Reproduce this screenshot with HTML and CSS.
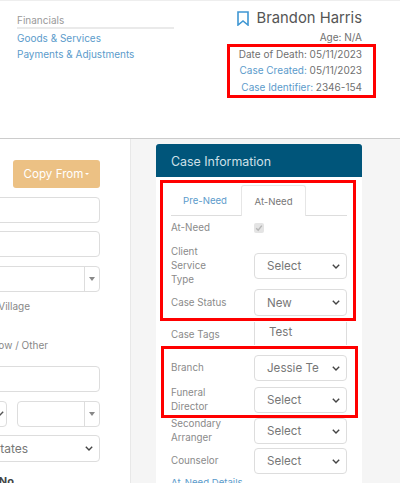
FILE: index.html
```html
<!DOCTYPE html>
<html lang="en">
<head>
<meta charset="utf-8">
<title>Case Information</title>
<link rel="stylesheet" href="styles.css">
</head>
<body>
<div class="page">
  <header class="top">
    <nav class="fin">
      <div class="fin-head">Financials</div>
      <a class="link fin-link">Goods &amp; Services</a>
      <a class="link fin-link">Payments &amp; Adjustments</a>
    </nav>
    <div class="who">
      <div class="name-line">
        <svg class="mark" width="12" height="15" viewBox="0 0 12 15"><path d="M1 1h10v13L6 10 1 14z" fill="none" stroke="#3f97d3" stroke-width="1.6"/></svg>
        <span class="name">Brandon Harris</span>
      </div>
      <div class="meta age">Age: N/A</div>
      <div class="meta">Date of Death: 05/11/2023</div>
      <div class="meta"><a class="link">Case Created:</a> 05/11/2023</div>
      <div class="meta"><a class="link">Case Identifier:</a> 2346-154</div>
    </div>
  </header>
  <main class="main">
    <section class="left">
      <button class="copy">Copy From<span class="caret"></span></button>
      <div class="field"></div>
      <div class="field"></div>
      <div class="field combo"><span class="addon"><span class="mini"></span></span></div>
      <div class="note n1">Village</div>
      <div class="note n2">Widow / Other</div>
      <div class="field f4"></div>
      <div class="pair">
        <div class="field stub"><svg class="chev" width="8" height="5" viewBox="0 0 8 5"><path d="M.8.8 4 4 7.2.8" fill="none" stroke="#555" stroke-width="1.4"/></svg></div>
        <div class="field combo short"><span class="addon"><span class="mini"></span></span></div>
      </div>
      <div class="field country"><span class="country-t">United States</span><svg class="chev" width="8" height="5" viewBox="0 0 8 5"><path d="M.8.8 4 4 7.2.8" fill="none" stroke="#444" stroke-width="1.4"/></svg></div>
      <div class="no">No</div>
    </section>
    <aside class="gutter">
      <div class="panel">
        <div class="panel-head">Case Information</div>
        <div class="panel-body">
          <div class="tabs">
            <a class="tab link">Pre-Need</a>
            <span class="tab on">At-Need</span>
          </div>
          <div class="row r-check"><span class="lbl">At-Need</span><span class="check"><svg width="8" height="8" viewBox="0 0 8 8"><path d="M1.2 4.2 3.2 6.2 6.8 1.6" fill="none" stroke="#b5b5b5" stroke-width="1.4"/></svg></span></div>
          <div class="row r-client"><span class="lbl">Client<br>Service<br>Type</span><div class="sel"><span class="val">Select</span><svg class="chev" width="8" height="5" viewBox="0 0 8 5"><path d="M.8.8 4 4 7.2.8" fill="none" stroke="#444" stroke-width="1.4"/></svg></div></div>
          <div class="row r-status"><span class="lbl">Case Status</span><div class="sel tall"><span class="val">New</span><svg class="chev" width="8" height="5" viewBox="0 0 8 5"><path d="M.8.8 4 4 7.2.8" fill="none" stroke="#444" stroke-width="1.4"/></svg></div></div>
          <div class="row r-tags"><span class="lbl lbl-tags">Case Tags</span><div class="tagbox">Test</div></div>
          <div class="row r-branch"><span class="lbl">Branch</span><div class="sel"><span class="val">Jessie Test</span><svg class="chev" width="8" height="5" viewBox="0 0 8 5"><path d="M.8.8 4 4 7.2.8" fill="none" stroke="#444" stroke-width="1.4"/></svg></div></div>
          <div class="row r-next"><span class="lbl">Funeral<br>Director</span><div class="sel"><span class="val">Select</span><svg class="chev" width="8" height="5" viewBox="0 0 8 5"><path d="M.8.8 4 4 7.2.8" fill="none" stroke="#444" stroke-width="1.4"/></svg></div></div>
          <div class="row r-next"><span class="lbl">Secondary<br>Arranger</span><div class="sel"><span class="val">Select</span><svg class="chev" width="8" height="5" viewBox="0 0 8 5"><path d="M.8.8 4 4 7.2.8" fill="none" stroke="#444" stroke-width="1.4"/></svg></div></div>
          <div class="row r-next"><span class="lbl">Counselor</span><div class="sel"><span class="val">Select</span><svg class="chev" width="8" height="5" viewBox="0 0 8 5"><path d="M.8.8 4 4 7.2.8" fill="none" stroke="#444" stroke-width="1.4"/></svg></div></div>
          <a class="link more">At-Need Details</a>
        </div>
      </div>
    </aside>
  </main>
  <div class="mark-box b1"></div>
  <div class="mark-box b2"></div>
  <div class="mark-box b3"></div>
</div>
</body>
</html>
```
FILE: styles.css
```css
* { box-sizing: border-box; }
html, body { margin: 0; padding: 0; }
body { width: 400px; height: 483px; overflow: hidden; background: #fff; font-family: Inter, "Noto Sans", sans-serif; color: #777; }
.page { position: relative; width: 400px; height: 483px; overflow: hidden; }
.link { color: #5b9bcb; text-decoration: none; }

.top { display: flex; justify-content: space-between; height: 139px; border-top: 1px solid #eee; border-bottom: 1px solid #ccc; }
.fin { width: 157px; margin-left: 17px; padding-top: 13px; display: flex; flex-direction: column; font-size: 10px; }
.fin-head { height: 15px; color: #9a9a9a; border-bottom: 2px solid #eaeaea; }
.fin-link { display: block; height: 16px; line-height: 16px; padding-top: 1px; }
.who { margin-right: 38px; padding-top: 6px; display: flex; flex-direction: column; align-items: flex-end; }
.name-line { display: flex; align-items: center; gap: 8px; height: 22px; }
.name { font-size: 14.8px; color: #555; }
.meta { font-size: 10px; height: 16.6px; line-height: 16.6px; color: #707070; white-space: nowrap; }
.age { margin-top: 0; }

.main { display: flex; height: 344px; }
.left { width: 131px; padding: 21px 30px 0 0; display: flex; flex-direction: column; align-items: flex-end; overflow: hidden; background: #fff; border-right: 1px solid #e8e8e8; flex: none; }
.copy { width: 87px; height: 28px; border: 0; border-radius: 3px; background: #ecc184; color: #fff; font: inherit; font-size: 11.6px; padding: 0; display: flex; align-items: center; justify-content: center; flex: none; }
.caret { width: 0; height: 0; margin-left: 2px; border: 2.5px solid transparent; border-top-color: #fff; border-bottom: 0; }
.field { width: 140px; height: 26px; margin-top: 8.5px; border: 1px solid #ddd; border-radius: 4px; background: #fff; flex: none; position: relative; display: flex; align-items: center; justify-content: flex-end; }
.combo { justify-content: flex-end; }
.addon { width: 15px; height: 100%; border-left: 1px solid #ddd; display: flex; align-items: center; justify-content: center; }
.mini { width: 0; height: 0; border: 3px solid transparent; border-top: 4px solid #888; border-bottom: 0; }
.note { font-size: 10px; color: #888; white-space: nowrap; flex: none; }
.n1 { margin: 8px 70px 0 0; }
.n2 { margin: 27px 52px 0 0; }
.f4 { margin-top: 15px; }
.pair { display: flex; align-self: flex-end; gap: 10px; flex: none; }
.pair .field { margin-top: 9px; }
.stub { width: 50px; padding-right: 2px; }
.short { width: 83px; }
.country { width: 180px; margin-top: 8px; padding-right: 6px; font-size: 12px; color: #777; justify-content: space-between; height: 27px; }
.country-t { margin-left: 31px; white-space: nowrap; }
.no { align-self: flex-end; margin: 12px 86px 0 0; font-size: 11px; font-weight: 700; color: #444; white-space: nowrap; }

.gutter { flex: 1; background: #f5f5f5; padding: 5px 38px 0 25px; }
.panel { width: 206px; background: #fff; }
.panel-head { height: 33px; line-height: 35px; padding-left: 15px; background: #00557a; color: #cfe0e8; font-size: 12.4px; border-radius: 3px 3px 0 0; }
.panel-body { padding: 8px 15px 0 15px; }
.tabs { display: flex; height: 31px; border-bottom: 1px solid #ddd; }
.tab { font-size: 9.6px; display: flex; align-items: center; justify-content: center; }
.tab.link { width: 70px; padding-right: 2px; }
.tab.on { width: 65px; height: 31px; border: 1px solid #e6e6e6; border-bottom: 0; border-radius: 3px 3px 0 0; background: #fff; color: #777; margin-bottom: -1px; }

.row { display: grid; grid-template-columns: 83px 93px; align-items: center; }
.lbl { font-size: 9.8px; line-height: 14px; color: #8a8a8a; }
.lbl-tags { padding-top: 3px; }
.r-check { height: 24px; }
.check { width: 10px; height: 10px; background: #e4e4e4; border-radius: 2px; display: flex; align-items: center; justify-content: center; }
.r-client { height: 42px; margin-top: 5px; }
.r-status { margin-top: 2px; }
.r-tags { margin-top: 6px; height: 23px; }
.r-branch { margin-top: 10px; }
.r-next { margin-top: 5px; height: 26px; }
.sel { height: 26px; border: 1px solid #ddd; border-radius: 4px; background: #fff; display: flex; align-items: center; justify-content: space-between; padding: 0 6px 0 12px; font-size: 11.6px; color: #777; }
.sel.tall { height: 27px; }
.val { width: 52px; overflow: hidden; white-space: nowrap; }
.tagbox { height: 23px; border: 1px solid #ddd; border-top: 0; border-bottom: 0; padding: 3px 0 0 14px; font-size: 11.6px; color: #777; }
.more { display: block; margin-top: 3px; font-size: 9.6px; white-space: nowrap; }

.mark-box { position: absolute; border: 3px solid #f00; }
.b1 { left: 227px; top: 44px; width: 149px; height: 54px; }
.b2 { left: 160px; top: 180px; width: 196px; height: 141px; }
.b3 { left: 161px; top: 346px; width: 197px; height: 72px; }
```
